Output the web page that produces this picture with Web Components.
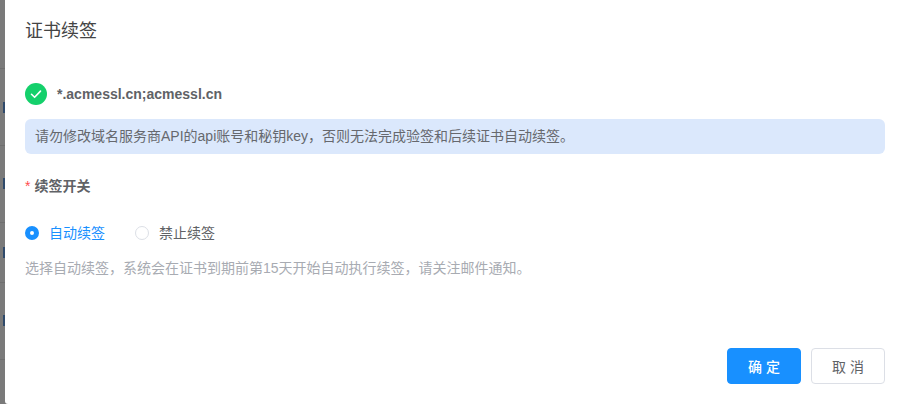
<!DOCTYPE html>
<html lang="zh-CN"><head><meta charset="utf-8"><style>
html,body{margin:0;height:100%;background:#7a7a7a;overflow:hidden}
body{font-family:"Liberation Sans","Noto Sans CJK SC",sans-serif;display:flex}
</style></head><body>
<page-backdrop></page-backdrop>
<renew-dialog heading="证书续签">
  <domain-line>*.acmessl.cn;acmessl.cn</domain-line>
  <info-note>请勿修改域名服务商API的api账号和秘钥key，否则无法完成验签和后续证书自动续签。</info-note>
  <form-label>续签开关</form-label>
  <radio-group>
    <radio-item checked>自动续签</radio-item>
    <radio-item>禁止续签</radio-item>
  </radio-group>
  <hint-text>选择自动续签，系统会在证书到期前第15天开始自动执行续签，请关注邮件通知。</hint-text>
  <action-button slot="footer" primary>确 定</action-button>
  <action-button slot="footer">取 消</action-button>
</renew-dialog>
<script>
function def(name, html){
  customElements.define(name, class extends HTMLElement{
    constructor(){super();const r=this.attachShadow({mode:'open'});r.innerHTML=html;}
  });
}
const band=(y,h,c)=>`linear-gradient(${c},${c}) 0 ${y}px/100% ${h}px no-repeat`;
const tick=(y)=>`linear-gradient(#2f4a6b,#2f4a6b) 3px ${y}px/2px 11px no-repeat`;
def('page-backdrop',`<style>:host{display:block;width:5px;flex:none;height:100%;background:${
  [tick(102),tick(178),tick(247),tick(315),band(68,1,'#6f6f6f'),band(145,1,'#6f6f6f'),band(222,1,'#6f6f6f'),band(282,1,'#6f6f6f'),band(359,1,'#6f6f6f')].join(',')
},#7a7a7a}</style>`);
customElements.define('renew-dialog',class extends HTMLElement{
  constructor(){super();const r=this.attachShadow({mode:'open'});
  r.innerHTML=`<style>
  :host{display:flex;flex-direction:column;flex:1;min-width:0;height:404px;box-sizing:border-box;padding:0 20px;background:#fff;border-bottom-left-radius:3px}
  h2{margin:0;padding-top:19px;height:68px;box-sizing:border-box;font-size:18px;line-height:24px;font-weight:400;color:#444}
  main{flex:1;display:flex;flex-direction:column}
  footer{display:flex;justify-content:flex-end;gap:10px;padding-bottom:20px}
  </style><h2></h2><main><slot></slot></main><footer><slot name="footer"></slot></footer>`;
  r.querySelector('h2').textContent=this.getAttribute('heading');}
});
def('domain-line',`<style>
  :host{display:flex;align-items:center;gap:10px;height:22px;margin-top:15px;font-size:14px;font-weight:700;color:#606266}
  svg{width:22px;height:22px;flex:none}
  </style><svg viewBox="0 0 22 22"><circle cx="11" cy="11" r="11" fill="#14d06b"/><path d="M6.5 11.3l3.1 3 5.9-6.2" fill="none" stroke="#fff" stroke-width="1.6" stroke-linecap="round" stroke-linejoin="round"/></svg><span><slot></slot></span>`);
def('info-note',`<style>
  :host{display:block;margin-top:14px;height:35px;line-height:35px;box-sizing:border-box;padding:0 10px 0 11px;text-indent:-1px;background:#dbe8fc;border-radius:6px;font-size:14px;color:#66686e;white-space:nowrap}
  </style><slot></slot>`);
def('form-label',`<style>
  :host{display:block;margin-top:22px;height:20px;line-height:20px;font-size:14px;font-weight:700;color:#606266}
  i{font-style:normal;font-weight:400;color:#ff4d4f;margin-right:4px}
  </style><i>*</i><slot></slot>`);
def('radio-group',`<style>:host{display:flex;gap:30px;margin-top:26px;height:20px;align-items:center}</style><slot></slot>`);
customElements.define('radio-item',class extends HTMLElement{
  constructor(){super();const r=this.attachShadow({mode:'open'});
  r.innerHTML=`<style>
  :host{display:flex;align-items:center;gap:10px;font-size:14px;color:#606266}
  :host([checked]){color:#1890ff}
  b{width:14px;height:14px;margin-top:1px;box-sizing:border-box;border-radius:50%;border:1px solid #dcdfe6;background:#fff;display:block}
  :host([checked]) b{border:5px solid #1890ff}
  </style><b></b><span><slot></slot></span>`;}
});
def('hint-text',`<style>:host{display:block;margin-top:16px;height:20px;line-height:20px;font-size:14px;color:#a8abb2;white-space:nowrap}</style><slot></slot>`);
customElements.define('action-button',class extends HTMLElement{
  constructor(){super();const r=this.attachShadow({mode:'open'});
  r.innerHTML=`<style>
  :host{display:flex;align-items:center;justify-content:center;width:74px;height:36px;box-sizing:border-box;border:1px solid #dcdfe6;border-radius:4px;background:#fff;color:#606266;font-size:14px}
  :host([primary]){background:#1890ff;border-color:#1890ff;color:#fff;font-weight:500}
  </style><slot></slot>`;}
});
</script>
</body></html>
